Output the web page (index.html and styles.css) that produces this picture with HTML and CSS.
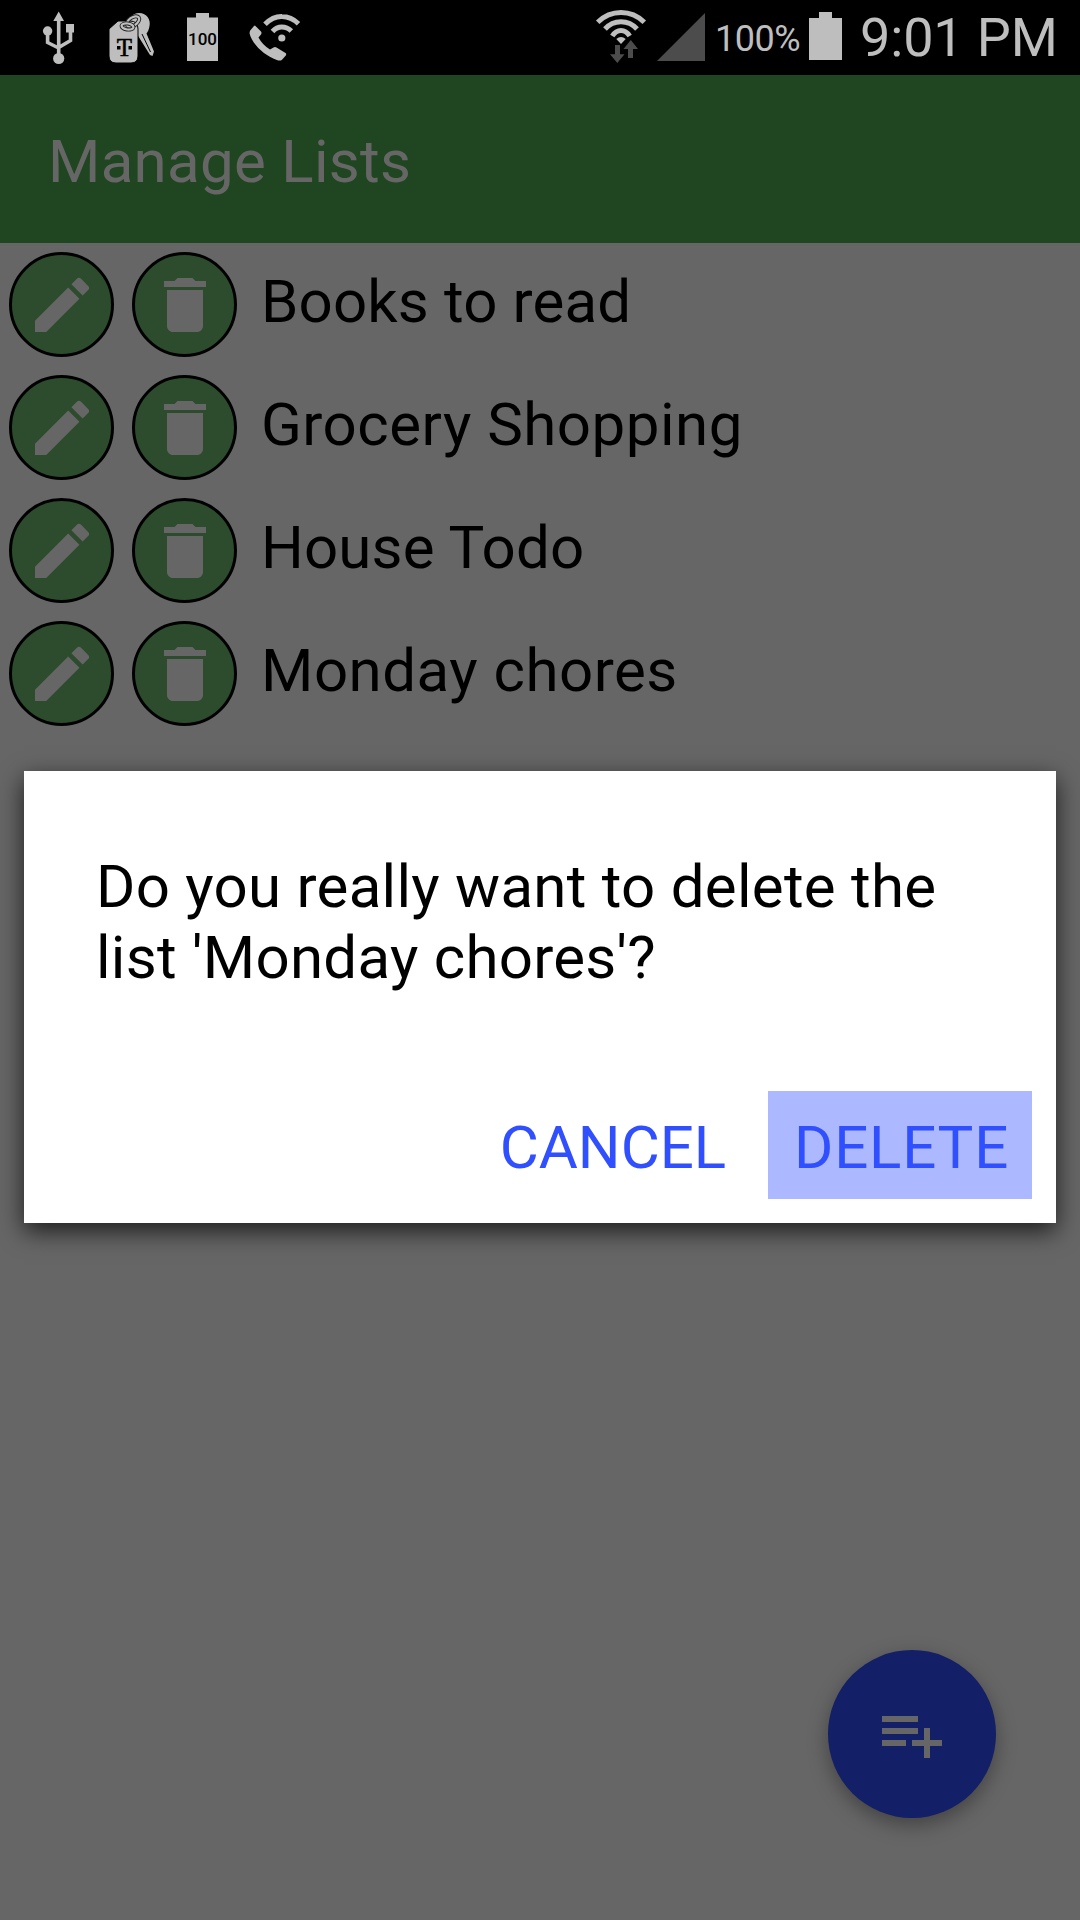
FILE: index.html
```html
<!DOCTYPE html>
<html lang="en">
<head>
<meta charset="utf-8">
<title>Manage Lists</title>
<link rel="stylesheet" href="styles.css">
</head>
<body>
<svg class="defs" width="0" height="0" aria-hidden="true">
  <symbol id="edit" viewBox="0 0 24 24"><path d="M3 17.25V21h3.75L17.81 9.94l-3.75-3.75L3 17.25zM20.71 7.04a1 1 0 0 0 0-1.41l-2.34-2.34a1 1 0 0 0-1.41 0l-1.83 1.83 3.75 3.75 1.83-1.83z"/></symbol>
  <symbol id="trash" viewBox="0 0 24 24"><path d="M6 19c0 1.100.9 2 2 2h8c1.100 0 2-.9 2-2V7H6v12zM19 4h-3.500l-1-1h-5l-1 1H5v2h14V4z"/></symbol>
</svg>
<div class="screen">
  <header class="status">
    <div class="status-left">
      <svg width="66" height="75" viewBox="26 0 66 75">
        <path class="lit" d="M58.700 11.500l5.300 9.500H53.300zM66 24h8v8.500h-8z"/>
        <circle class="lit" cx="47.600" cy="31" r="4.700"/>
        <circle class="lit" cx="58.700" cy="58.500" r="5.600"/>
        <path class="line" d="M58.700 19v36M47.600 33v9.500l11 5.500M70.500 32v8.500l-11.800 7"/>
      </svg>
      <svg width="78" height="75" viewBox="92 0 78 75">
        <path class="lit" d="M139 13c8 0 12 7 10.500 13-.5 3.500-1.500 5.500-3 7.500l7.500 18-1.500 4.500-2.500-1-12.500-20-9-10c0-7 4-12 10.500-12z"/>
        <path class="dark-line" d="M142 34l8.500 18"/>
        <path class="tag" d="M118 21h12q8 0 8 8v27q0 7-7 7h-15q-7 0-7-7V29z"/>
        <ellipse class="ring-edge" cx="133" cy="21.500" rx="7" ry="4" transform="rotate(-35 133 21.500)"/>
        <ellipse class="ring" cx="133" cy="21.500" rx="7" ry="4" transform="rotate(-35 133 21.500)"/>
        <ellipse class="ring-edge" cx="127.500" cy="26.500" rx="6" ry="3" transform="rotate(8 127.500 26.500)"/>
        <ellipse class="ring" cx="127.500" cy="26.500" rx="6" ry="3" transform="rotate(8 127.500 26.500)"/>
        <text class="tag-text" x="124.500" y="56" text-anchor="middle">T</text>
        <path d="M117 46h3.500v3.500H117zM128.500 46h3.500v3.500h-3.500z"/>
      </svg>
      <svg width="64" height="75" viewBox="170 0 64 75">
        <path class="lit" d="M187 17.500h9V13h13v4.500h9V61h-31z"/>
        <text class="level" x="202.500" y="45" text-anchor="middle">100</text>
      </svg>
      <svg width="76" height="75" viewBox="234 0 76 75">
        <path class="lit" d="M255.500 26l5.500 5.500q1 1.500 0 3l-2.500 3q4 7.500 11.500 12l3.500-2q1.500-.8 3 0l9 5.500q1.300 1 .3 2.500l-4 4.500q-2 1-5 0C263 55 252 43 249.700 34q-.5-3 1.300-4.500l3-3.500q.8-.8 1.500 0z"/>
        <circle class="lit" cx="281.800" cy="38" r="3.600"/>
        <path class="wave" d="M265 24.200q8-8 17-7.700 9 0 16.500 7.200M272.500 31.500q4-4.500 9.300-4.500 5.500 0 9.500 4"/>
      </svg>
    </div>
    <div class="status-right">
      <svg width="62" height="75" viewBox="590 0 62 75">
        <path class="wave" d="M597.700 22.200q10-9.700 23.300-9.700t23.300 9.700M605 29q6.500-7.300 16-7.300t16 7.300M612.300 36q3.500-5.500 8.700-5.500t8.700 5.500"/>
        <path class="lit" d="M616.300 39q4.700-4 9.400 0l-4.700 5z"/>
        <path class="dim" d="M615 45h5v9.300h4.500l-7.200 8.700-7.300-8.700h5zM628 58v-9h-4.500l7.300-9 7.200 9h-5v9z"/>
      </svg>
      <svg width="58" height="75" viewBox="652 0 58 75"><path class="dim" d="M705 13v48h-48z"/></svg>
      <span class="percent">100%</span>
      <svg width="50" height="75" viewBox="800 0 50 75"><path class="lit" d="M809 18h10v-6h13v6h10v42h-33z"/></svg>
      <span class="clock">9:01 PM</span>
    </div>
  </header>
  <h1 class="appbar">Manage Lists</h1>
  <ul class="lists">
    <li class="row"><button class="round"><svg><use href="#edit"/></svg></button><button class="round"><svg><use href="#trash"/></svg></button><span class="name tight">Books to read</span></li>
    <li class="row"><button class="round"><svg><use href="#edit"/></svg></button><button class="round"><svg><use href="#trash"/></svg></button><span class="name">Grocery Shopping</span></li>
    <li class="row"><button class="round"><svg><use href="#edit"/></svg></button><button class="round"><svg><use href="#trash"/></svg></button><span class="name tight">House Todo</span></li>
    <li class="row"><button class="round"><svg><use href="#edit"/></svg></button><button class="round"><svg><use href="#trash"/></svg></button><span class="name">Monday chores</span></li>
  </ul>
  <button class="fab"><svg viewBox="0 0 24 24"><path d="M14 10H2v2h12v-2zm0-4H2v2h12V6zm4 8v-4h-2v4h-4v2h4v4h2v-4h4v-2h-4zM2 16h8v-2H2v2z"/></svg></button>
  <section class="dialog" role="dialog">
    <p class="message">Do you really want to delete the list 'Monday chores'?</p>
    <div class="actions">
      <button class="action">CANCEL</button>
      <button class="action pressed">DELETE</button>
    </div>
  </section>
</div>
</body>
</html>
```
FILE: styles.css
```css
* { box-sizing: border-box; }
body { margin: 0; background: #666; font-family: Roboto, sans-serif; font-size: 60px; line-height: 70px; color: #000; }
button { border: 0; padding: 0; margin: 0; background: none; font: inherit; }
.defs { position: absolute; }
.screen { position: relative; width: 1080px; height: 1920px; overflow: hidden; background: #666; }

.status { display: flex; justify-content: space-between; height: 75px; padding-left: 26px; background: #000; color: #bebebe; }
.status-left, .status-right { display: flex; }
.status-right { width: 490px; }
.status svg { display: block; flex: none; }
.lit { fill: #bebebe; }
.dim { fill: #4c4c4c; }
.line { fill: none; stroke: #bebebe; stroke-width: 3.6; }
.dark-line { fill: none; stroke: #000; stroke-width: 1; }
.wave { fill: none; stroke: #bebebe; stroke-width: 5; }
.tag { fill: #bebebe; stroke: #000; stroke-width: 1; }
.ring-edge { fill: none; stroke: #222; stroke-width: 4; }
.ring { fill: none; stroke: #bebebe; stroke-width: 2.2; }
.tag-text { font: 25px "Liberation Serif", serif; stroke: #000; stroke-width: .5; }
.level { font: 500 17px Roboto, sans-serif; }
.percent { width: 90px; padding: 4px 0 0 5px; font-size: 36px; line-height: 70px; letter-spacing: -.5px; white-space: nowrap; }
.clock { padding-left: 10px; font-size: 54px; line-height: 75px; letter-spacing: -.15px; white-space: nowrap; }

.appbar { height: 168px; margin: 0; padding: 5px 0 0 48px; background: #1f4620; color: #666; font-size: 60px; font-weight: 400; line-height: 163px; letter-spacing: .3px; }

.lists { margin: 0; padding: 0; list-style: none; }
.row { display: flex; gap: 18px; height: 123px; padding: 9px; }
.round { display: flex; align-items: center; justify-content: center; flex: none; width: 105px; height: 105px; border: 3px solid #000; border-radius: 50%; background: #2d4b2d; }
.round svg { width: 72px; height: 72px; fill: #666; }
.name { padding-left: 6px; line-height: 99px; letter-spacing: .5px; white-space: nowrap; }
.name.tight { letter-spacing: .15px; }

.fab { position: absolute; left: 828px; top: 1650px; display: flex; align-items: center; justify-content: center; width: 168px; height: 168px; border-radius: 50%; background: #131f66; box-shadow: 0 7px 20px rgba(0, 0, 0, .35); }
.fab svg { width: 72px; height: 72px; fill: #666; }

.dialog { position: absolute; left: 24px; top: 771px; display: flex; flex-direction: column; justify-content: space-between; width: 1032px; height: 452px; padding: 80px 24px 24px 72px; background: #fff; box-shadow: 0 8px 23px rgba(0, 0, 0, .72); }
.message { margin: 0; padding-right: 48px; line-height: 71px; letter-spacing: .27px; }
.actions { display: flex; justify-content: flex-end; gap: 18px; }
.action { height: 108px; padding: 5px 24px 0 26px; color: #304ffe; line-height: 103px; }
.pressed { padding-right: 23px; background: #acb8ff; letter-spacing: .75px; }
```
